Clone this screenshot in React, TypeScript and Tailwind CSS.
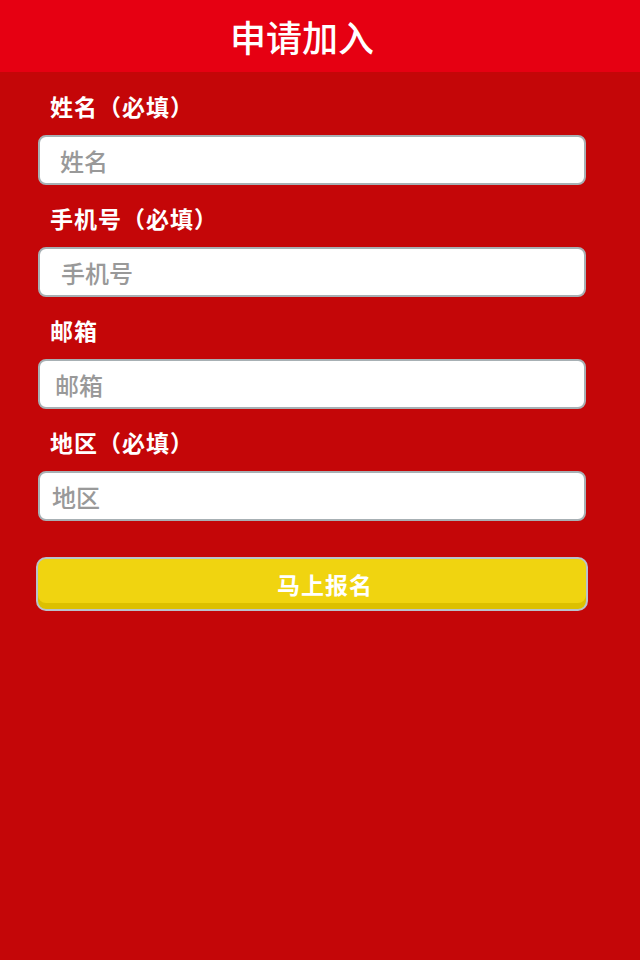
import React from "react";

const fields = [
  { label: "姓名（必填）", placeholder: "姓名", pad: "pl-[20px]" },
  { label: "手机号（必填）", placeholder: "手机号", pad: "pl-[21px]" },
  { label: "邮箱", placeholder: "邮箱", pad: "pl-[15px]" },
  { label: "地区（必填）", placeholder: "地区", pad: "pl-[12px]" },
];

const App = () => {
  return (
    <div
      className="min-h-[960px] w-full bg-[#c40608]"
      style={{ fontFamily: '"Noto Sans CJK SC", "Liberation Sans", sans-serif' }}
    >
      <div className="h-[72px] bg-[#e60012] flex items-center justify-center pr-[36px]">
        <h1 className="text-[36px] leading-none font-medium text-white">申请加入</h1>
      </div>
      <form className="px-[38px] pt-px">
        {fields.map((f, idx) => (
          <div key={idx} className="flex flex-col">
            <label className="mt-[19px] mb-[15px] pl-[12px] text-[23px] leading-[28px] tracking-[1px] font-bold text-white">
              {f.label}
            </label>
            <input
              type="text"
              placeholder={f.placeholder}
              className={`h-[50px] w-[548px] rounded-[8px] border-2 border-[#a7b0b4] bg-white ${f.pad} text-[24px] font-medium text-gray-700 placeholder:text-[#999999] outline-none`}
            />
          </div>
        ))}
        <button
          type="button"
          className="mt-[36px] -ml-[2px] h-[54px] w-[552px] rounded-[10px] border-2 border-[#b8c2cc] bg-[#f0d410] shadow-[inset_0_-6px_0_#dcc000] pl-[26px] text-[23px] tracking-[1px] font-bold text-white"
        >
          马上报名
        </button>
      </form>
    </div>
  );
};

export default App;
